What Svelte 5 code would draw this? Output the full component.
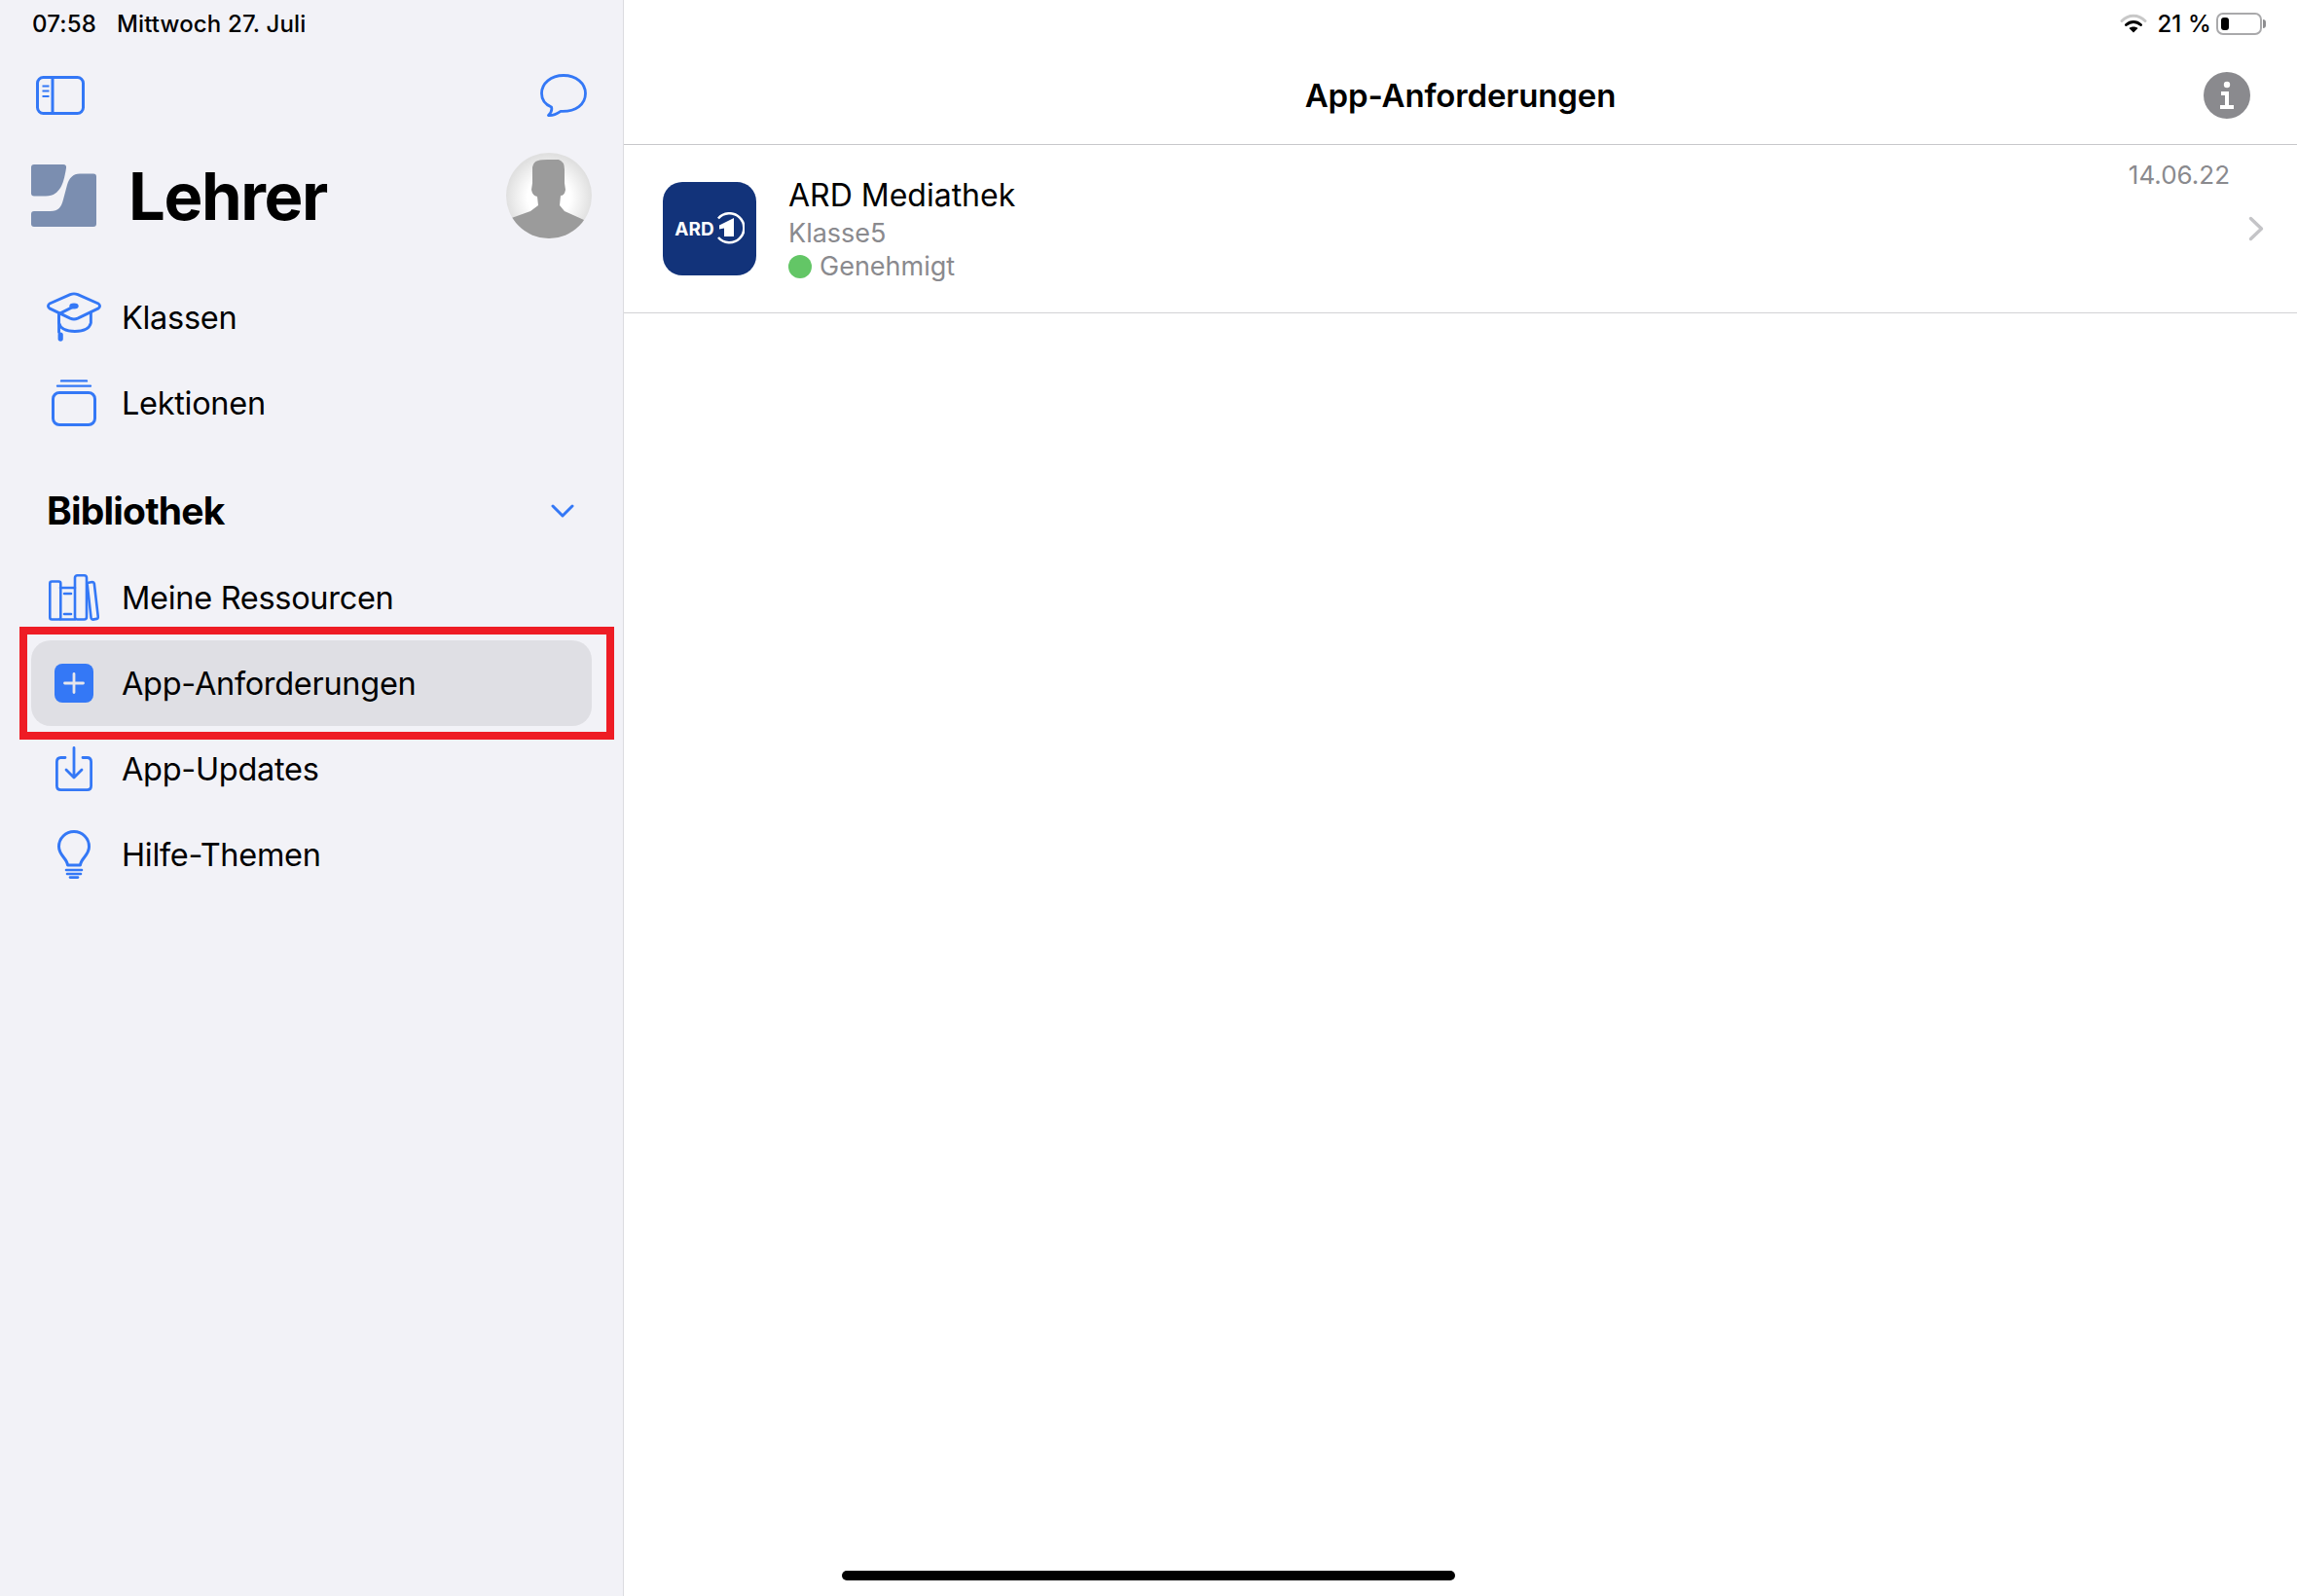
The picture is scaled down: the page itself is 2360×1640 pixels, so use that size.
<script lang="ts">
  const topItems = [
    { id: 'cap', label: 'Klassen' },
    { id: 'stack', label: 'Lektionen' }
  ];
  const libItems = [
    { id: 'books', label: 'Meine Ressourcen', active: false },
    { id: 'plus', label: 'App-Anforderungen', active: true },
    { id: 'update', label: 'App-Updates', active: false },
    { id: 'bulb', label: 'Hilfe-Themen', active: false }
  ];
</script>

{#snippet navIcon(id: string)}
  {#if id === 'cap'}
    <svg width="58" height="52" viewBox="0 0 58 52" fill="none" stroke="#3478f6" stroke-width="3" stroke-linejoin="round" stroke-linecap="round">
      <path d="M25 1.8Q29 0.2 33 1.8L55 11.5Q58 14 55 16.5L33 27.2Q29 28.8 25 27.2L3 16.5Q0 14 3 11.5Z" />
      <path d="M13 21.5V32Q15 41 30 41Q45 41 47 32V21" />
      <path d="M30 14L15 21.5Q13 22.5 13 25V42" />
      <ellipse cx="29" cy="14" rx="3.4" ry="1.6" fill="#3478f6" />
      <rect x="12" y="42" width="5.4" height="9.6" rx="2.7" fill="#3478f6" stroke="none" />
    </svg>
  {:else if id === 'stack'}
    <svg width="46" height="48" viewBox="0 0 46 48" fill="none" stroke="#3478f6" stroke-width="3" stroke-linecap="round">
      <rect x="1.5" y="13.5" width="43" height="33" rx="6.5" />
      <path d="M6 6.6H40M10 1.4H36" stroke-width="2.4" />
    </svg>
  {:else if id === 'books'}
    <svg width="52" height="48" viewBox="0 0 52 48" fill="none" stroke="#3478f6" stroke-width="2.6" stroke-linejoin="round" stroke-linecap="round">
      <rect x="1.3" y="7.5" width="11" height="39" rx="2" />
      <path d="M12 14H27M12 46.5H27" />
      <rect x="27" y="1.3" width="12" height="45.2" rx="2.5" />
      <path d="M39.5 9L45 8Q46.5 8 46.8 9.5L50.8 44Q50.8 45.6 49.4 45.9L45.4 46.6Q44 46.6 43.6 45.2Z" />
      <path d="M16 20H23M16 41H23" />
    </svg>
  {:else if id === 'plus'}
    <span class="plus-tile">
      <svg width="22" height="22" viewBox="0 0 22 22" stroke="#e6e6ec" stroke-width="2.8" stroke-linecap="round">
        <path d="M11 1.5V20.5M1.5 11H20.5" />
      </svg>
    </span>
  {:else if id === 'update'}
    <svg width="38" height="46" viewBox="0 0 38 46" fill="none" stroke="#3478f6" stroke-width="2.8" stroke-linecap="round" stroke-linejoin="round">
      <path d="M10 11.5H5.5Q1.4 11.5 1.4 15.8V40.5Q1.4 44.6 5.5 44.6H32.5Q36.6 44.6 36.6 40.5V15.8Q36.6 11.5 32.5 11.5H28" />
      <path d="M19 1.4V31.5M11 24L19 32L27 24" />
    </svg>
  {:else}
    <svg width="34" height="50" viewBox="0 0 34 50" fill="none" stroke="#3478f6" stroke-width="3" stroke-linecap="round" stroke-linejoin="round">
      <path d="M10.5 36C10 29 1.5 26 1.5 17A15.5 15.5 0 0 1 32.5 17C32.5 26 24 29 23.5 36Z" />
      <path d="M9 41H25M10 45H24" stroke-width="2.6" />
      <path d="M13 48.6H21" stroke-width="2.6" />
    </svg>
  {/if}
{/snippet}

<div class="ipad">
  <aside class="sidebar">
    <div class="status status-left">
      <span>07:58</span>
      <span>Mittwoch 27. Juli</span>
    </div>

    <div class="toolbar">
      <svg width="50" height="40" viewBox="0 0 50 40" fill="none" stroke="#3478f6" stroke-width="3">
        <rect x="1.5" y="1.5" width="47" height="37" rx="6" />
        <path d="M17 1.5V38.5" />
        <path d="M6.5 10.5H13.5M6.5 15.5H13.5M6.5 21H13.5" stroke-width="2.2" />
      </svg>
      <svg width="48" height="44" viewBox="0 0 48 44" fill="none" stroke="#3478f6" stroke-width="2.8" stroke-linejoin="round">
        <path d="M24 1.5C11 1.5 1.5 9.5 1.5 20C1.5 26 4.5 31 11.5 34C12.5 37 11 40 8.5 42.5C13 43 17 41 21 38.3C37 39 46.5 31 46.5 20C46.5 9.5 37 1.5 24 1.5Z" />
      </svg>
    </div>

    <div class="brand">
      <svg class="logo" width="67" height="64" viewBox="0 0 67 64" fill="#7b8eb0">
        <path d="M3 0H33Q36.5 0 36 3.5C34 16 31 32.5 15 32.5H3Q0 32.5 0 29.5V3Q0 0 3 0Z" />
        <path d="M50 9.5H64Q67 9.5 67 12.5V61Q67 64 64 64H3Q0 64 0 61V51Q0 48 3 48H20C28 48 31 44 33 36L37 21C39 14 43 9.5 50 9.5Z" />
      </svg>
      <h1>Lehrer</h1>
      <svg class="avatar" width="88" height="88" viewBox="0 0 88 88">
        <defs>
          <radialGradient id="halo" cx="50%" cy="52%" r="50%">
            <stop offset="50%" stop-color="#ffffff" />
            <stop offset="100%" stop-color="#e0e0e0" />
          </radialGradient>
          <clipPath id="disc"><circle cx="44" cy="44" r="44" /></clipPath>
        </defs>
        <circle cx="44" cy="44" r="44" fill="url(#halo)" />
        <path clip-path="url(#disc)" fill="#9b9b9b" d="M33 8Q36 7 43 7H54Q60 9 60 17V31L61 38Q60 44 56 44L55 54L60 60L80 69V88H0V69L25 60L33 54L32 45Q27 44 26 38L27 31V15Q28 9 33 8Z" />
      </svg>
    </div>

    <nav class="nav">
      {#each topItems as item}
        <div class="nav-row">
          <span class="nav-icon">{@render navIcon(item.id)}</span>
          <span>{item.label}</span>
        </div>
      {/each}

      <div class="section-head">
        <h2>Bibliothek</h2>
        <svg width="24" height="16" viewBox="0 0 24 16" fill="none" stroke="#3478f6" stroke-width="3" stroke-linecap="round" stroke-linejoin="round">
          <path d="M2 3L12 13L22 3" />
        </svg>
      </div>

      {#each libItems as item}
        <div class="nav-row" class:active={item.active}>
          <span class="nav-icon">{@render navIcon(item.id)}</span>
          <span>{item.label}</span>
          {#if item.active}<span class="callout"></span>{/if}
        </div>
      {/each}
    </nav>
  </aside>

  <main class="detail">
    <div class="status status-right">
      <svg width="28" height="20" viewBox="0 0 28 20" fill="none" stroke-linecap="round">
        <path d="M2 7.5C9 0.5 19 0.5 26 7.5" stroke="#c8c8c8" stroke-width="3" />
        <path d="M6.5 11.5C11 7.5 17 7.5 21.5 11.5" stroke="#000" stroke-width="3" />
        <path d="M14 19.5L9.5 15C12 13 16 13 18.5 15Z" fill="#000" />
      </svg>
      <span class="percent">21 %</span>
      <span class="battery"><span class="charge"></span></span>
    </div>

    <header class="title-bar">
      <h2>App-Anforderungen</h2>
      <span class="info">
        <svg width="16" height="30" viewBox="0 0 16 30" fill="#fff">
          <circle cx="8" cy="4" r="3.2" />
          <path d="M2 11H10V25H15V29H1V25H6V15H2Z" />
        </svg>
      </span>
    </header>

    <div class="request">
      <div class="app-tile">
        <span class="ard">ARD</span>
        <svg width="30" height="34" viewBox="0 0 30 34" fill="none">
          <path d="M3 6.5A15 15 0 1 1 3 26" stroke="#fff" stroke-width="2.6" />
          <path d="M4 13.5L19 6V25H9V16.5L4 17.5Z" fill="#fff" />
        </svg>
      </div>
      <div class="request-text">
        <div class="app-name">ARD Mediathek</div>
        <div class="sub">Klasse5</div>
        <div class="state"><span class="dot"></span><span class="sub">Genehmigt</span></div>
      </div>
      <div class="request-meta">
        <span class="date">14.06.22</span>
        <svg width="16" height="26" viewBox="0 0 16 26" fill="none" stroke="#c4c4c7" stroke-width="3.4" stroke-linecap="round" stroke-linejoin="round">
          <path d="M2.5 2.5L13.5 13L2.5 23.5" />
        </svg>
      </div>
    </div>
  </main>

  <div class="home-bar"></div>
</div>

<style>
  :global(body) {
    margin: 0;
    background: #fff;
  }

  .ipad {
    position: relative;
    display: flex;
    width: 2360px;
    height: 1640px;
    overflow: hidden;
    font-family: Inter, "Liberation Sans", sans-serif;
    color: #000;
  }

  .sidebar {
    flex: 0 0 641px;
    box-sizing: border-box;
    background: #f2f2f7;
    border-right: 1px solid #dcdce0;
  }

  .status {
    display: flex;
    align-items: center;
    height: 48px;
    font-size: 24px;
    font-weight: 500;
    letter-spacing: 0.15px;
  }

  .status-left {
    gap: 21px;
    padding-left: 33px;
  }

  .status-right {
    justify-content: flex-end;
    padding-right: 36px;
  }

  .toolbar {
    display: flex;
    align-items: center;
    justify-content: space-between;
    height: 100px;
    padding: 0 37px 0 37px;
  }

  .brand {
    display: flex;
    align-items: center;
    height: 106px;
    padding: 0 32px;
  }

  .logo {
    margin-right: 33px;
  }

  h1 {
    flex: 1;
    margin: 0;
    font-size: 67px;
    font-weight: 700;
    letter-spacing: -1.4px;
  }

  .nav {
    margin-top: 28px;
    padding: 0 32px;
  }

  .nav-row {
    position: relative;
    display: flex;
    align-items: center;
    gap: 21px;
    height: 88px;
    padding-left: 16px;
    border-radius: 20px;
    font-size: 32.5px;
    letter-spacing: -0.3px;
  }

  .nav-row.active {
    background: #dfdfe4;
  }

  .nav-icon {
    display: flex;
    align-items: center;
    justify-content: center;
    flex: 0 0 56px;
    min-width: 0;
    height: 56px;
  }

  .plus-tile {
    display: flex;
    align-items: center;
    justify-content: center;
    width: 40px;
    height: 40px;
    border-radius: 8px;
    background: #3478f6;
  }

  /* red annotation frame around the selected row */
  .callout {
    position: absolute;
    top: -14px;
    right: -23px;
    bottom: -14px;
    left: -12px;
    border: 8px solid #ee1c25;
    pointer-events: none;
  }

  .section-head {
    display: flex;
    align-items: center;
    justify-content: space-between;
    box-sizing: border-box;
    height: 112px;
    padding: 22px 18px 0 16px;
  }

  .section-head h2 {
    margin: 0;
    margin-top: -2px;
    font-size: 39px;
    font-weight: 700;
    letter-spacing: -0.8px;
  }

  .detail {
    flex: 1;
    min-width: 0;
  }

  .percent {
    margin: 0 5px 0 10px;
  }

  .battery {
    position: relative;
    box-sizing: border-box;
    display: block;
    width: 47px;
    height: 23px;
    padding: 3px;
    border: 2px solid #a9a9ab;
    border-radius: 7px;
  }

  .battery::after {
    content: '';
    position: absolute;
    top: 5px;
    right: -6px;
    width: 3px;
    height: 9px;
    border-radius: 0 3px 3px 0;
    background: #8e8e90;
  }

  .charge {
    display: block;
    width: 8px;
    height: 100%;
    border-radius: 3px;
    background: #000;
  }

  .title-bar {
    position: relative;
    display: flex;
    align-items: center;
    justify-content: center;
    height: 100px;
    border-bottom: 1px solid #c8c8cb;
  }

  .title-bar h2 {
    margin: 0;
    font-size: 33px;
    font-weight: 600;
    letter-spacing: -0.15px;
  }

  .info {
    position: absolute;
    top: 26px;
    right: 48px;
    display: flex;
    align-items: center;
    justify-content: center;
    width: 48px;
    height: 48px;
    border-radius: 50%;
    background: #8a8a8e;
  }

  .request {
    display: flex;
    align-items: center;
    height: 172px;
    padding: 0 34px 0 40px;
    border-bottom: 1px solid #d2d2d5;
  }

  .app-tile {
    display: flex;
    flex: 0 0 96px;
    align-items: center;
    justify-content: center;
    gap: 1px;
    height: 96px;
    border-radius: 20px;
    background: #12337a;
  }

  .ard {
    color: #fff;
    font-size: 19px;
    font-weight: 700;
  }

  .request-text {
    flex: 1;
    margin-left: 33px;
    margin-top: -1px;
  }

  .app-name {
    font-size: 32px;
    line-height: 44px;
  }

  .sub {
    color: #8a8a8e;
    font-size: 27px;
    line-height: 34px;
  }

  .state {
    display: flex;
    align-items: center;
    gap: 8px;
  }

  .dot {
    width: 24px;
    height: 24px;
    border-radius: 50%;
    background: #63c666;
  }

  .request-meta {
    align-self: stretch;
    display: flex;
    flex-direction: column;
    align-items: flex-end;
    padding-top: 15px;
    gap: 26px;
  }

  .date {
    margin-right: 35px;
    color: #8a8a8e;
    font-size: 26px;
    line-height: 32px;
  }

  .home-bar {
    position: absolute;
    left: 865px;
    bottom: 16px;
    width: 630px;
    height: 10px;
    border-radius: 5px;
    background: #000;
  }
</style>
